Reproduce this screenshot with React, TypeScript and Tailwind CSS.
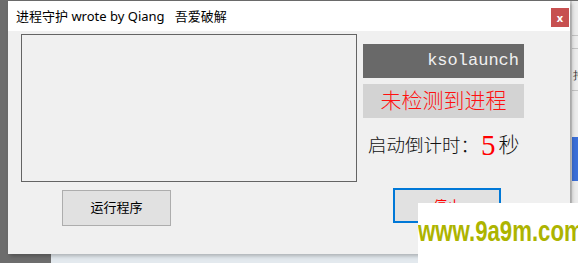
import React from 'react'

const cjk = { fontFamily: '"Noto Sans", "Noto Sans CJK SC", sans-serif' }
const serif = { fontFamily: '"Liberation Serif", "Noto Sans CJK SC", serif' }

export default function App() {
  return (
    <div className="relative w-[578px] h-[263px] overflow-hidden bg-[#6d6d6d]">
      {/* desktop behind the window */}
      <div className="absolute left-[51px] top-[254px] w-[527px] h-[9px] bg-[#e3e9ee]" />
      <div className="absolute left-[570px] top-[1px] w-[8px] h-[253px] bg-[#ececec] border-l-2 border-[#d2d2d2]">
        <div className="mt-[34px] h-px bg-[#c4c4c4]" />
        <div className="mt-[12px] h-px bg-[#c4c4c4]" />
        <div className="mt-[20px] ml-[1px] text-[11px] leading-none text-[#333]">持</div>
        <div className="mt-[10px] h-px bg-[#c4c4c4]" />
        <div className="mt-[46px] h-[44px] bg-[#3b6fd8]" />
      </div>

      {/* the window */}
      <div className="absolute left-[8px] top-[1px] w-[562px] h-[253px] flex flex-col bg-[#f0f0f0] shadow-[2px_2px_4px_rgba(0,0,0,0.25)]">
        <div className="h-[30px] bg-white flex items-start justify-between">
          <div className="pt-[6px] pl-[8px] text-[13px] leading-[18px] text-black whitespace-pre" style={cjk}>
            进程守护 wrote by Qiang   吾爱破解
          </div>
          <div className="mt-[7px] mr-px w-[18px] h-[19px] bg-[#c75050] flex items-center justify-center text-white text-[11px] font-bold leading-none" style={cjk}>
            x
          </div>
        </div>

        <div className="flex-1 flex pt-[3px] pl-[13px]">
          <div className="flex flex-col">
            <div className="w-[336px] h-[148px] border border-[#646464] bg-[#f0f0f0]" />
            <button className="mt-[8px] ml-[41px] w-[109px] h-[36px] bg-[#e1e1e1] border border-[#adadad] text-[13px] text-black" style={cjk}>
              运行程序
            </button>
          </div>

          <div className="ml-[6px] pt-[10px] w-[161px] flex flex-col">
            <div
              className="h-[34px] bg-[#696969] text-[#f0f0f0] text-[17px] flex items-center justify-end pr-[5px]"
              style={{ fontFamily: '"Liberation Mono", monospace' }}
            >
              ksolaunch
            </div>
            <div className="mt-[6px] h-[34px] bg-[#d3d3d3] text-[#ff1010] text-[21px] font-light flex items-center justify-center" style={cjk}>
              未检测到进程
            </div>
            <div className="mt-[8px] h-[38px] pl-[5px] flex items-center text-[18.5px] text-[#111]" style={serif}>
              <span style={cjk} className="font-light">启动倒计时：</span>
              <span className="ml-[2px] text-[29px] leading-none text-[#ff0000]">5</span>
              <span style={cjk} className="ml-[3px] text-[21px] font-light">秒</span>
            </div>
            <button className="mt-[24px] ml-[30px] w-[108px] h-[35px] bg-[#e1e1e1] border-2 border-[#0078d7] text-[14px] text-[#ff0000]" style={cjk}>
              停止
            </button>
          </div>
        </div>
      </div>

      {/* watermark over everything */}
      <div className="absolute left-[418px] top-[203px] w-[160px] h-[60px] bg-white overflow-hidden">
        <div
          className="mt-[13px] origin-left scale-x-[0.74] whitespace-nowrap text-[30px] font-bold leading-[30px] text-[#adb400]"
          style={{ fontFamily: '"Liberation Sans", Arial, sans-serif' }}
        >
          www.9a9m.com
        </div>
      </div>
    </div>
  )
}
